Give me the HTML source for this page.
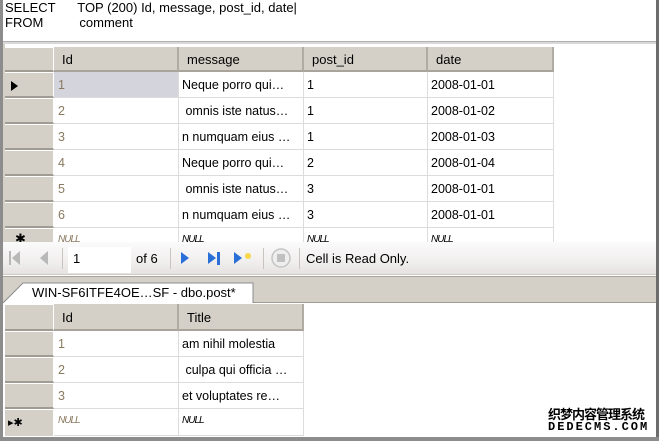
<!DOCTYPE html>
<html><head><meta charset="utf-8"><style>
*{margin:0;padding:0;box-sizing:border-box}
body{width:659px;height:441px;overflow:hidden;background:#fff;font-family:"Liberation Sans","Noto Sans CJK SC",sans-serif;font-size:12px;color:#000;position:relative}
.a{position:absolute}
.rh{position:absolute;left:5px;width:49px;background:#d4d0c8;border-right:1px solid #fff;border-bottom:2px solid #a09c94;border-top:1px solid #fff}
.hd{position:absolute;background:#d4d0c8;border-right:2px solid #b0aca4;border-bottom:2px solid #a8a49c;padding:5px 0 0 8px;color:#000;font-size:13px}
.c{position:absolute;border-right:1px solid #dcdcdc;border-bottom:1px solid #dcdcdc;padding:6px 0 0 3px;white-space:nowrap;overflow:hidden;font-size:12.5px}
.g{color:#8a7a60}
.n{font-style:italic;font-size:10px;letter-spacing:-1px}
</style></head><body>
<div class="a" style="left:0;top:0;width:3px;height:441px;background:#8c8c8c"></div>
<div class="a" style="right:0;top:0;width:3px;height:441px;background:#6c6c6c"></div>
<div class="a" style="left:0;bottom:0;width:659px;height:4px;background:#8c8c8c"></div>
<div class="a" style="left:5px;top:0;line-height:15px;font-size:13px">SELECT&nbsp;&nbsp;&nbsp;&nbsp;&nbsp;&nbsp;TOP (200) Id, message, post_id, date|<br>FROM&nbsp;&nbsp;&nbsp;&nbsp;&nbsp;&nbsp;&nbsp;&nbsp;&nbsp;&nbsp;comment</div>
<div class="a" style="left:3px;top:41px;width:653px;height:3px;background:#d8d8d8;border-top:1px solid #b0b0b0"></div>
<div class="a" style="left:3px;top:44px;width:2px;height:200px;background:#d4d0c8"></div>

<div class="rh" style="top:47px;height:25px"></div>
<div class="hd" style="left:54px;top:47px;width:125px;height:25px">Id</div>
<div class="hd" style="left:179px;top:47px;width:125px;height:25px">message</div>
<div class="hd" style="left:304px;top:47px;width:124px;height:25px">post_id</div>
<div class="hd" style="left:428px;top:47px;width:126px;height:25px">date</div>

<div class="rh" style="top:72px;height:26px"><span class="a" style="left:6px;top:8px;width:0;height:0;border-left:7px solid #000;border-top:5px solid transparent;border-bottom:5px solid transparent"></span></div>
<div class="c g" style="left:54px;top:72px;width:125px;height:26px;background:#d4d4dc;padding-left:4px">1</div>
<div class="c" style="left:179px;top:72px;width:125px;height:26px">Neque porro qui…</div>
<div class="c" style="left:304px;top:72px;width:124px;height:26px">1</div>
<div class="c" style="left:428px;top:72px;width:126px;height:26px">2008-01-01</div>

<div class="rh" style="top:98px;height:26px"></div>
<div class="c g" style="left:54px;top:98px;width:125px;height:26px;padding-left:4px">2</div>
<div class="c" style="left:179px;top:98px;width:125px;height:26px">&nbsp;omnis iste natus…</div>
<div class="c" style="left:304px;top:98px;width:124px;height:26px">1</div>
<div class="c" style="left:428px;top:98px;width:126px;height:26px">2008-01-02</div>

<div class="rh" style="top:124px;height:26px"></div>
<div class="c g" style="left:54px;top:124px;width:125px;height:26px;padding-left:4px">3</div>
<div class="c" style="left:179px;top:124px;width:125px;height:26px">n numquam eius …</div>
<div class="c" style="left:304px;top:124px;width:124px;height:26px">1</div>
<div class="c" style="left:428px;top:124px;width:126px;height:26px">2008-01-03</div>

<div class="rh" style="top:150px;height:26px"></div>
<div class="c g" style="left:54px;top:150px;width:125px;height:26px;padding-left:4px">4</div>
<div class="c" style="left:179px;top:150px;width:125px;height:26px">Neque porro qui…</div>
<div class="c" style="left:304px;top:150px;width:124px;height:26px">2</div>
<div class="c" style="left:428px;top:150px;width:126px;height:26px">2008-01-04</div>

<div class="rh" style="top:176px;height:26px"></div>
<div class="c g" style="left:54px;top:176px;width:125px;height:26px;padding-left:4px">5</div>
<div class="c" style="left:179px;top:176px;width:125px;height:26px">&nbsp;omnis iste natus…</div>
<div class="c" style="left:304px;top:176px;width:124px;height:26px">3</div>
<div class="c" style="left:428px;top:176px;width:126px;height:26px">2008-01-01</div>

<div class="rh" style="top:202px;height:26px"></div>
<div class="c g" style="left:54px;top:202px;width:125px;height:26px;padding-left:4px">6</div>
<div class="c" style="left:179px;top:202px;width:125px;height:26px">n numquam eius …</div>
<div class="c" style="left:304px;top:202px;width:124px;height:26px">3</div>
<div class="c" style="left:428px;top:202px;width:126px;height:26px">2008-01-01</div>

<div class="rh" style="top:228px;height:20px;border-bottom:0"><span class="a" style="left:10px;top:2px;font-size:13px">✱</span></div>
<div class="c g n" style="left:54px;top:228px;width:125px;height:20px;padding-left:4px">NULL</div>
<div class="c n" style="left:179px;top:228px;width:125px;height:20px">NULL</div>
<div class="c n" style="left:304px;top:228px;width:124px;height:20px">NULL</div>
<div class="c n" style="left:428px;top:228px;width:126px;height:20px">NULL</div>

<div class="a" style="left:3px;top:242px;width:653px;height:33px;background:linear-gradient(#fbfbfb,#f1eeee 60%,#e6e2e2);border-bottom:1px solid #cfcac4"></div>
<svg class="a" style="left:0;top:242px" width="400" height="33">
<g fill="#b8b8b8"><rect x="9" y="9" width="2" height="14"/><path d="M20 9 L12 16 L20 23Z"/><path d="M48 9 L40 16 L48 23Z"/></g>
<rect x="62" y="6" width="1" height="21" fill="#c8c4c0"/>
<rect x="68" y="5" width="63" height="26" fill="#fff"/>
<rect x="170" y="6" width="1" height="21" fill="#c8c4c0"/>
<g fill="#2a6fd8"><path d="M181 10 L189 16 L181 22Z"/><path d="M208 10 L216 16 L208 22Z"/><rect x="217" y="10" width="3" height="13"/><path d="M234 10 L242 16 L234 22Z"/></g>
<circle cx="248" cy="14" r="3" fill="#f6d84a"/>
<rect x="263" y="6" width="1" height="21" fill="#c8c4c0"/>
<circle cx="281" cy="16" r="9" fill="#eee" stroke="#c4c4c4" stroke-width="1.5"/>
<rect x="277" y="12" width="8" height="8" fill="#c0c0c0"/>
<rect x="299" y="6" width="1" height="21" fill="#c8c4c0"/>
</svg>
<div class="a" style="left:73px;top:251px;font-size:13px">1</div>
<div class="a" style="left:136px;top:251px;font-size:13px">of 6</div>
<div class="a" style="left:306px;top:251px;font-size:13px">Cell is Read Only.</div>

<div class="a" style="left:3px;top:276px;width:653px;height:27px;background:#d4d0c8;border-top:1px solid #a8a49c;border-bottom:1px solid #a09c94"></div>
<svg class="a" style="left:3px;top:282px" width="255" height="22"><path d="M0 21 L20 1 L250 1 L250 21" fill="#fff" stroke="#8c8c8c"/></svg>
<div class="a" style="left:32px;top:285px;font-size:13px">WIN-SF6ITFE4OE…SF - dbo.post*</div>

<div class="rh" style="top:304px;height:27px"></div>
<div class="hd" style="left:54px;top:304px;width:125px;height:27px;padding-top:6px">Id</div>
<div class="hd" style="left:179px;top:304px;width:125px;height:27px;padding-top:6px">Title</div>

<div class="rh" style="top:331px;height:26px"></div>
<div class="c g" style="left:54px;top:331px;width:125px;height:26px;padding-left:4px">1</div>
<div class="c" style="left:179px;top:331px;width:125px;height:26px">am nihil molestia</div>
<div class="rh" style="top:357px;height:26px"></div>
<div class="c g" style="left:54px;top:357px;width:125px;height:26px;padding-left:4px">2</div>
<div class="c" style="left:179px;top:357px;width:125px;height:26px">&nbsp;culpa qui officia …</div>
<div class="rh" style="top:383px;height:26px"></div>
<div class="c g" style="left:54px;top:383px;width:125px;height:26px;padding-left:4px">3</div>
<div class="c" style="left:179px;top:383px;width:125px;height:26px">et voluptates re…</div>
<div class="rh" style="top:409px;height:27px;border-bottom:0"><span class="a" style="left:3px;top:6px;font-size:11px">▸✱</span></div>
<div class="c g n" style="left:54px;top:409px;width:125px;height:27px;padding-left:4px">NULL</div>
<div class="c n" style="left:179px;top:409px;width:125px;height:27px">NULL</div>

<div class="a" style="left:548px;top:404px;font-size:13px;font-weight:bold;letter-spacing:-1px">织梦内容管理系统</div>
<div class="a" style="left:548px;top:420px;font-size:12px;font-weight:bold;letter-spacing:2px;font-family:'Liberation Mono',monospace">DEDECMS.COM</div>
</body></html>
